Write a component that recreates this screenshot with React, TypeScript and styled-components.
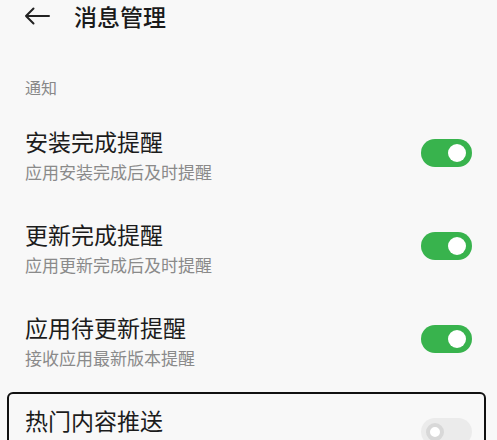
import styled, { createGlobalStyle } from "styled-components";

const GlobalStyle = createGlobalStyle`
  body {
    margin: 0;
    background: #f8f8f8;
    font-family: "Noto Sans CJK SC", "Noto Sans", sans-serif;
    color: #1c1c1c;
  }
`;

const Page = styled.div`
  width: 497px;
  height: 440px;
  overflow: hidden;
  background: #f8f8f8;
`;

const Header = styled.div`
  height: 32px;
  display: flex;
  align-items: center;
  padding-left: 24px;
`;

const BackButton = styled.div`
  width: 26px;
  height: 18px;
  display: flex;
  align-items: center;
  margin-right: 24px;
`;

const Title = styled.h1`
  margin: 0;
  font-size: 23px;
  line-height: 32px;
  font-weight: 500;
  color: #1a1a1a;
`;

const SectionLabel = styled.div`
  margin-top: 45px;
  padding-left: 25px;
  font-size: 16px;
  line-height: 20px;
  color: #888;
  margin-bottom: 11px;
`;

const Row = styled.div<{ $focused?: boolean }>`
  position: relative;
  display: flex;
  align-items: center;
  justify-content: space-between;
  padding: 18px 25px 17px 25px;
  height: 58px;

  ${({ $focused }) =>
    $focused &&
    `
    &::after {
      content: "";
      position: absolute;
      top: 5px;
      left: 7px;
      right: 11px;
      bottom: -20px;
      border: 2.5px solid #111;
      border-radius: 6px;
      pointer-events: none;
    }
  `}
`;

const Texts = styled.div`
  align-self: flex-start;
  display: flex;
  flex-direction: column;
  gap: 4px;
`;

const RowTitle = styled.div`
  font-size: 23px;
  line-height: 30px;
  color: #1c1c1c;
`;

const RowSub = styled.div`
  font-size: 17px;
  line-height: 24px;
  color: #8a8a8a;
`;

const Track = styled.div<{ $on: boolean }>`
  width: 51px;
  height: 28px;
  border-radius: 14px;
  background: ${({ $on }) => ($on ? "#38b34d" : "#ebebeb")};
  display: flex;
  align-items: center;
  justify-content: ${({ $on }) => ($on ? "flex-end" : "flex-start")};
  padding: 0 ${({ $on }) => ($on ? "6px" : "0")} 0 ${({ $on }) => ($on ? "0" : "5px")};
  box-sizing: border-box;
  margin-bottom: 5px;
`;

const Knob = styled.div<{ $on: boolean }>`
  width: 18px;
  height: 18px;
  border-radius: 50%;
  box-sizing: border-box;
  background: #fff;
  border: ${({ $on }) => ($on ? "none" : "4px solid #d8d8d8")};
`;

const Toggle = ({ on }: { on: boolean }) => (
  <Track $on={on}>
    <Knob $on={on} />
  </Track>
);

type Item = { title: string; sub?: string; on: boolean; focused?: boolean };

const items: Item[] = [
  { title: "安装完成提醒", sub: "应用安装完成后及时提醒", on: true },
  { title: "更新完成提醒", sub: "应用更新完成后及时提醒", on: true },
  { title: "应用待更新提醒", sub: "接收应用最新版本提醒", on: true },
  { title: "热门内容推送", on: false, focused: true },
];

const App = () => (
  <Page>
    <GlobalStyle />
    <Header>
      <BackButton>
        <svg width="26" height="18" viewBox="0 0 26 18" fill="none">
          <path
            d="M25 9H2M9.5 1.5L2 9l7.5 7.5"
            stroke="#222"
            strokeWidth="2"
            strokeLinecap="round"
            strokeLinejoin="round"
          />
        </svg>
      </BackButton>
      <Title>消息管理</Title>
    </Header>
    <SectionLabel>通知</SectionLabel>
    {items.map((it) => (
      <Row key={it.title} $focused={it.focused}>
        <Texts>
          <RowTitle>{it.title}</RowTitle>
          {it.sub && <RowSub>{it.sub}</RowSub>}
        </Texts>
        <Toggle on={it.on} />
      </Row>
    ))}
  </Page>
);

export default App;
